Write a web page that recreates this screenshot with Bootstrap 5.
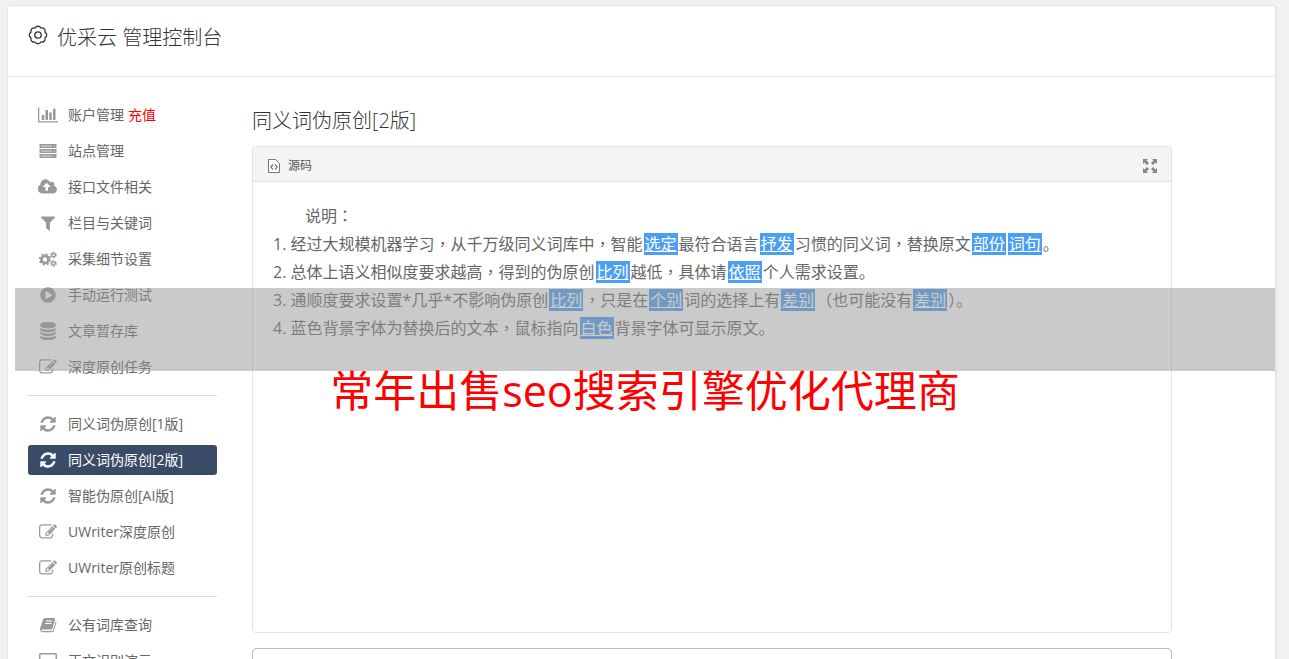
<!DOCTYPE html>
<html lang="zh-CN">
<head>
<meta charset="utf-8">
<meta name="viewport" content="width=device-width, initial-scale=1">
<title>优采云 管理控制台</title>
<link href="https://cdn.jsdelivr.net/npm/bootstrap@5.3.0/dist/css/bootstrap.min.css" rel="stylesheet">
<script src="https://cdn.jsdelivr.net/npm/bootstrap@5.3.0/dist/js/bootstrap.bundle.min.js" defer></script>
<style>
body{background:#f1f1f1;color:#666;font-family:"Open Sans","Noto Sans CJK SC",sans-serif;font-size:14px;height:100vh;overflow:hidden}
.console{margin:5px 12px 0 7px;background:#fff;border:1px solid #e5e5e5;border-right-width:2px;border-radius:4px 4px 0 0}
.console-head{height:71px;padding:16px 20px;border-bottom:1px solid #e5e5e5}
.console-head h1{font-size:20px;line-height:32px;color:#333;font-weight:300}
.gear{margin-top:3px}
.side{width:189px;margin:23px 0 0 20px}
.side .nav{gap:6px}
.side .nav-link{display:flex;align-items:center;height:30px;padding:0 0 0 10px;color:#666;border-radius:3px;font-size:14px;line-height:30px}
.side .nav-link svg{width:20px;height:18px;margin-right:10px;fill:#999;color:#999;flex:none}
.side .nav-link.active{background:#3a4b67;color:#fff}
.side .nav-link.active svg{fill:#fff}
.side hr{margin:13px 0;color:#ddd;opacity:1;border-top:1px solid #ddd}
.recharge{color:#f00;margin-left:4px}
.work{margin:28px 103px 0 35px}
.work h2{font-size:20px;line-height:32px;color:#333;font-weight:300;margin-bottom:9px}
.editor{border-color:#e3e3e3;border-radius:4px}
.editor .card-header{background:#f4f4f4;border-color:#e3e3e3;height:35px;padding:3px 14px 0 15px}
.tool{border:0;background:none;padding:0;color:#555;font-size:12px;line-height:30px}
.editor .card-body{min-height:450px;padding:20px;font-size:16px;line-height:28px}
.editor p{text-indent:2em}
.swap{background:#4a9ff5;color:#fff;padding:0 1px;margin:0 1px}
.mid{font-family:"Noto Sans CJK TC",sans-serif;line-height:1}
.next-box{height:120px;margin-top:15px;border:1px solid #bbb;border-radius:4px;resize:none}
.notice{position:absolute;top:288px;left:15px;right:14px;pointer-events:none}
.notice-band{height:83px;background:rgba(150,150,150,.5)}
.notice-text{font-size:43px;line-height:39px;color:#f00}
</style>
</head>
<body>
<svg class="d-none">
<symbol id="chart" viewBox="0 0 2048 1792"><path d="M640 896v512h-256v-512h256zm384-512v1024h-256v-1024h256zm1024 1152v128h-2048v-1536h128v1408h1920zm-640-896v768h-256v-768h256zm384-384v1152h-256v-1152h256z"/></symbol>
<symbol id="server" viewBox="0 0 20 18"><path d="M1.500 2h17v4h-17zM1.500 7h17v4h-17zM1.500 12h17v4h-17z"/><path fill="#ddd" d="M3 3.500h11v1H3zM3 8.500h11v1H3zM3 13.500h11v1H3zM16 3.500h1v1h-1zM16 8.500h1v1h-1zM16 13.500h1v1h-1z"/></symbol>
<symbol id="cloud" viewBox="0 0 1920 1792"><path d="M1216 864q0-14-9-23l-352-352q-9-9-23-9t-23 9l-351 351q-10 12-10 24 0 14 9 23t23 9h224v352q0 13 9.500 22.500t22.500 9.500h192q13 0 22.500-9.500t9.500-22.500v-352h224q13 0 22.500-9.500t9.500-22.500zm640 288q0 159-112.500 271.500t-271.500 112.500h-1088q-185 0-316.500-131.500t-131.500-316.500q0-130 70-240t188-165q-2-30-2-43 0-212 150-362t362-150q156 0 285.500 87t188.500 231q71-62 166-62 106 0 181 75t75 181q0 76-41 138 130 31 213.500 135.500t83.500 238.500z"/></symbol>
<symbol id="filter" viewBox="0 0 1792 1792"><path d="M1595 295q17 41-14 70l-493 493v742q0 42-39 59-13 5-25 5-27 0-45-19l-256-256q-19-19-19-45v-486l-493-493q-31-29-14-70 17-39 59-39h1280q42 0 59 39z"/></symbol>
<symbol id="cogs" viewBox="0 0 20 18"><g fill="none" stroke="currentColor"><circle cx="7" cy="9.500" r="3.500" stroke-width="2.600"/><circle cx="7" cy="9.500" r="5.300" stroke-width="1.600" stroke-dasharray="2.080 2.080"/><circle cx="15.500" cy="5" r="1.800" stroke-width="1.400"/><circle cx="15.500" cy="5" r="2.900" stroke-width="1" stroke-dasharray="1.520 1.520"/><circle cx="15.500" cy="13.500" r="1.800" stroke-width="1.400"/><circle cx="15.500" cy="13.500" r="2.900" stroke-width="1" stroke-dasharray="1.520 1.520"/></g></symbol>
<symbol id="play" viewBox="0 0 1792 1792"><path d="M896 128q209 0 385.500 103t279.500 279.500 103 385.500-103 385.500-279.500 279.500-385.500 103-385.500-103-279.500-279.500-103-385.500 103-385.500 279.500-279.500 385.500-103zm384 823q32-18 32-55t-32-55l-544-320q-31-19-64-1-32 19-32 56v640q0 37 32 56 16 8 32 8 17 0 32-9z"/></symbol>
<symbol id="db" viewBox="0 0 1792 1792"><path d="M896 768q237 0 443-43t325-127v170q0 69-103 128t-280 93.500-385 34.500-385-34.500-280-93.500-103-128v-170q119 84 325 127t443 43zm0 768q237 0 443-43t325-127v170q0 69-103 128t-280 93.500-385 34.500-385-34.500-280-93.500-103-128v-170q119 84 325 127t443 43zm0-384q237 0 443-43t325-127v170q0 69-103 128t-280 93.500-385 34.500-385-34.500-280-93.500-103-128v-170q119 84 325 127t443 43zm0-1152q208 0 385 34.500t280 93.500 103 128v128q0 69-103 128t-280 93.500-385 34.500-385-34.500-280-93.500-103-128v-128q0-69 103-128t280-93.500 385-34.500z"/></symbol>
<symbol id="edit" viewBox="0 0 1792 1792"><path d="M888 1184l116-116-152-152-116 116v56h96v96h56zm440-720q-16-16-33 1l-350 350q-17 17-1 33t33-1l350-350q17-17 1-33zm80 594v190q0 119-84.500 203.500t-203.500 84.500h-832q-119 0-203.500-84.500t-84.500-203.500v-832q0-119 84.500-203.500t203.500-84.500h832q63 0 117 25 15 7 18 23 3 17-9 29l-49 49q-14 14-32 8-23-6-45-6h-832q-66 0-113 47t-47 113v832q0 66 47 113t113 47h832q66 0 113-47t47-113v-126q0-13 9-22l64-64q15-15 35-7t20 29zm-96-738l288 288-672 672h-288v-288zm444 132l-92 92-288-288 92-92q28-28 68-28t68 28l152 152q28 28 28 68t-28 68z"/></symbol>
<symbol id="sync" viewBox="0 0 1792 1792"><path d="M1639 1056q0 5-1 7-64 268-268 434.500t-478 166.500q-146 0-282.500-55t-243.500-157l-129 129q-19 19-45 19t-45-19-19-45v-448q0-26 19-45t45-19h448q26 0 45 19t19 45-19 45l-137 137q71 66 161 102t187 36q134 0 250-65t186-179q11-17 53-117 8-23 30-23h192q13 0 22.500 9.500t9.500 22.500zm25-800v448q0 26-19 45t-45 19h-448q-26 0-45-19t-19-45 19-45l138-138q-148-137-349-137-134 0-250 65t-186 179q-11 17-53 117-8 23-30 23h-199q-13 0-22.500-9.500t-9.500-22.500v-7q65-268 270-434.500t480-166.500q146 0 284 55.500t245 156.500l130-129q19-19 45-19t45 19 19 45z"/></symbol>
<symbol id="book" viewBox="0 0 20 18"><path d="M7 2h9q1.500 0 1 1.500l-2.500 9q-.3 1-1.500 1H4.500q-1.500 0-1.300.7.200.8 1.300.8h9.500q.8 0 1.100-.8L17.800 5q.9.500.6 1.500l-2.600 8.500q-.4 1.200-1.600 1.200H4.300Q2.500 16 2 13.500q-.1-.8.200-1.500L5 3.500Q5.500 2 7 2z"/><path d="M8 5h6M7.300 7.500h6" stroke="#fff" stroke-width="1"/></symbol>
<symbol id="screen" viewBox="0 0 20 18"><path fill="none" stroke="currentColor" stroke-width="1.500" d="M1.700 2.700q0-1 1-1h14.600q1 0 1 1v9.600q0 1-1 1H2.700q-1 0-1-1zM6 16.300h8"/></symbol>
</svg>

<div class="console">
  <header class="console-head d-flex align-items-start">
    <svg class="gear me-2" width="21" height="21" viewBox="0 0 21 21" fill="none" stroke="#333" stroke-width="1.300"><circle cx="10" cy="10" r="3.200"/><path stroke-linejoin="round" d="M7.100 3A3.300 3.300 0 0 1 12.900 3A3.300 3.300 0 0 1 17 7.100A3.300 3.300 0 0 1 17 12.900A3.300 3.300 0 0 1 12.900 17A3.300 3.300 0 0 1 7.100 17A3.300 3.300 0 0 1 3 12.900A3.300 3.300 0 0 1 3 7.100A3.300 3.300 0 0 1 7.100 3z"/></svg>
    <h1 class="mb-0">优采云 管理控制台</h1>
  </header>
  <div class="d-flex">
    <aside class="side flex-shrink-0">
      <nav class="nav flex-column">
        <a class="nav-link" href="#"><svg><use href="#chart"/></svg>账户管理<span class="recharge">充值</span></a>
        <a class="nav-link" href="#"><svg><use href="#server"/></svg>站点管理</a>
        <a class="nav-link" href="#"><svg><use href="#cloud"/></svg>接口文件相关</a>
        <a class="nav-link" href="#"><svg><use href="#filter"/></svg>栏目与关键词</a>
        <a class="nav-link" href="#"><svg><use href="#cogs"/></svg>采集细节设置</a>
        <a class="nav-link" href="#"><svg><use href="#play"/></svg>手动运行测试</a>
        <a class="nav-link" href="#"><svg><use href="#db"/></svg>文章暂存库</a>
        <a class="nav-link" href="#"><svg><use href="#edit"/></svg>深度原创任务</a>
      </nav>
      <hr>
      <nav class="nav flex-column">
        <a class="nav-link" href="#"><svg><use href="#sync"/></svg>同义词伪原创[1版]</a>
        <a class="nav-link active" aria-current="page" href="#"><svg><use href="#sync"/></svg>同义词伪原创[2版]</a>
        <a class="nav-link" href="#"><svg><use href="#sync"/></svg>智能伪原创[AI版]</a>
        <a class="nav-link" href="#"><svg><use href="#edit"/></svg>UWriter深度原创</a>
        <a class="nav-link" href="#"><svg><use href="#edit"/></svg>UWriter原创标题</a>
      </nav>
      <hr>
      <nav class="nav flex-column">
        <a class="nav-link" href="#"><svg><use href="#book"/></svg>公有词库查询</a>
        <a class="nav-link" href="#"><svg><use href="#screen"/></svg>正文识别演示</a>
      </nav>
    </aside>
    <main class="work flex-grow-1">
      <h2>同义词伪原创[2版]</h2>
      <section class="card editor">
        <div class="card-header d-flex justify-content-between align-items-center">
          <button type="button" class="tool d-flex align-items-center gap-2"><svg width="12" height="14" viewBox="0 0 12 14" fill="none" stroke="#777"><path d="M.5.5h7l4 4v9H.5z" fill="#fff"/><path d="M5 5.500 2.800 8 5 10.500M7 5.500 9.200 8 7 10.500" stroke-width="1.200"/></svg>源码</button>
          <button type="button" class="tool d-flex" aria-label="全屏"><svg width="14" height="14" viewBox="0 0 14 14" fill="#888"><path d="M0 0h5L3.500 1.500 6 4 4 6 1.500 3.500 0 5zM14 0v5l-1.500-1.500L10 6 8 4l2.500-2.500L9 0zM0 14V9l1.500 1.500L4 8l2 2-2.500 2.500L5 14zM14 14H9l1.500-1.500L8 10l2-2 2.500 2.500L14 9z"/></svg></button>
        </div>
        <div class="card-body">
          <p class="mb-0">说明<span class="mid" lang="zh-TW">：</span></p>
          <div>1. 经过大规模机器学习<span class="mid" lang="zh-TW">，</span>从千万级同义词库中<span class="mid" lang="zh-TW">，</span>智能<u class="swap">选定</u>最符合语言<u class="swap">抒发</u>习惯的同义词<span class="mid" lang="zh-TW">，</span>替换原文<u class="swap">部份</u><u class="swap">词句</u>。</div>
          <div>2. 总体上语义相似度要求越高<span class="mid" lang="zh-TW">，</span>得到的伪原创<u class="swap">比列</u>越低<span class="mid" lang="zh-TW">，</span>具体请<u class="swap">依照</u>个人需求设置。</div>
          <div>3. 通顺度要求设置*几乎*不影响伪原创<u class="swap">比列</u><span class="mid" lang="zh-TW">，</span>只是在<u class="swap">个别</u>词的选择上有<u class="swap">差别</u><span class="mid" lang="zh-TW">（</span>也可能没有<u class="swap">差别</u><span class="mid" lang="zh-TW">）</span>。</div>
          <div>4. 蓝色背景字体为替换后的文本<span class="mid" lang="zh-TW">，</span>鼠标指向<u class="swap">白色</u>背景字体可显示原文。</div>
        </div>
      </section>
      <textarea class="next-box form-control" aria-label="结果"></textarea>
    </main>
  </div>
</div>
<div class="notice">
  <div class="notice-band"></div>
  <div class="notice-text text-center">常年出售seo搜索引擎优化代理商</div>
</div>
</body>
</html>
